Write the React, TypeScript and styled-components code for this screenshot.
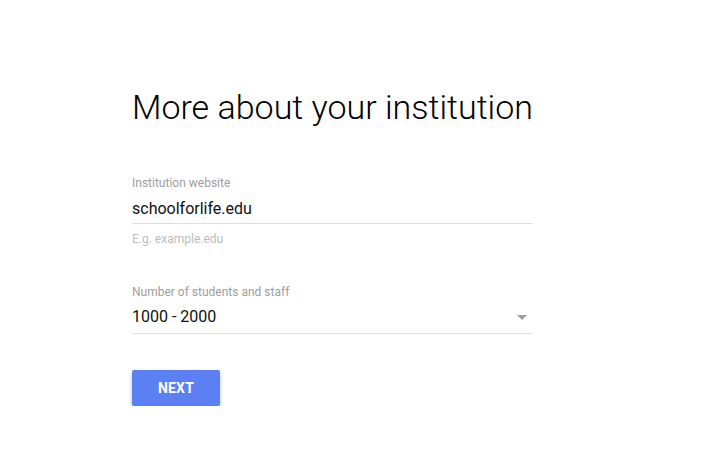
import { createGlobalStyle, styled } from 'styled-components';

const GlobalStyle = createGlobalStyle`
  body {
    margin: 0;
    background: #ffffff;
    font-family: Roboto, 'Liberation Sans', Arial, sans-serif;
  }
`;

const Page = styled.main`
  display: flex;
  flex-direction: column;
  padding: 87px 0 0 132px;
  width: 401px;
`;

const Title = styled.h1`
  margin: 0 0 48px;
  font-size: 34px;
  line-height: 40px;
  font-weight: 300;
  color: #000000;
  white-space: nowrap;
`;

const Field = styled.div<{ gap: number }>`
  display: flex;
  flex-direction: column;
  margin-bottom: ${({ gap }) => gap}px;
`;

const Label = styled.label`
  font-size: 12px;
  line-height: 16px;
  color: #9e9e9e;
`;

const Value = styled.div<{ height: number; offset: number }>`
  display: flex;
  justify-content: space-between;
  align-items: flex-start;
  margin-top: ${({ offset }) => offset}px;
  height: ${({ height }) => height}px;
  border-bottom: 1px solid #e0e0e0;
  font-size: 16px;
  line-height: 24px;
  color: #111111;
`;

const Hint = styled.div`
  margin-top: 7px;
  font-size: 12px;
  line-height: 16px;
  color: #bdbdbd;
`;

const Arrow = styled.span`
  width: 0;
  height: 0;
  margin: 10px 6px 0 0;
  border-left: 5px solid transparent;
  border-right: 5px solid transparent;
  border-top: 5px solid #9e9e9e;
`;

const NextButton = styled.button`
  width: 88px;
  height: 36px;
  border: none;
  border-radius: 2px;
  background: #5a80f3;
  color: #ffffff;
  font-family: Roboto, 'Liberation Sans', Arial, sans-serif;
  font-size: 14px;
  font-weight: 700;
  letter-spacing: 0.2px;
  box-shadow: 0 2px 4px rgba(0, 0, 0, 0.25);
  cursor: pointer;
`;

const App = () => {
  return (
    <>
      <GlobalStyle />
      <Page>
        <Title>More about your institution</Title>
        <Field gap={37}>
          <Label>Institution website</Label>
          <Value height={26} offset={6}>
            schoolforlife.edu
          </Value>
          <Hint>E.g. example.edu</Hint>
        </Field>
        <Field gap={36}>
          <Label>Number of students and staff</Label>
          <Value height={28} offset={5}>
            1000 - 2000
            <Arrow />
          </Value>
        </Field>
        <div>
          <NextButton>NEXT</NextButton>
        </div>
      </Page>
    </>
  );
};

export default App;
